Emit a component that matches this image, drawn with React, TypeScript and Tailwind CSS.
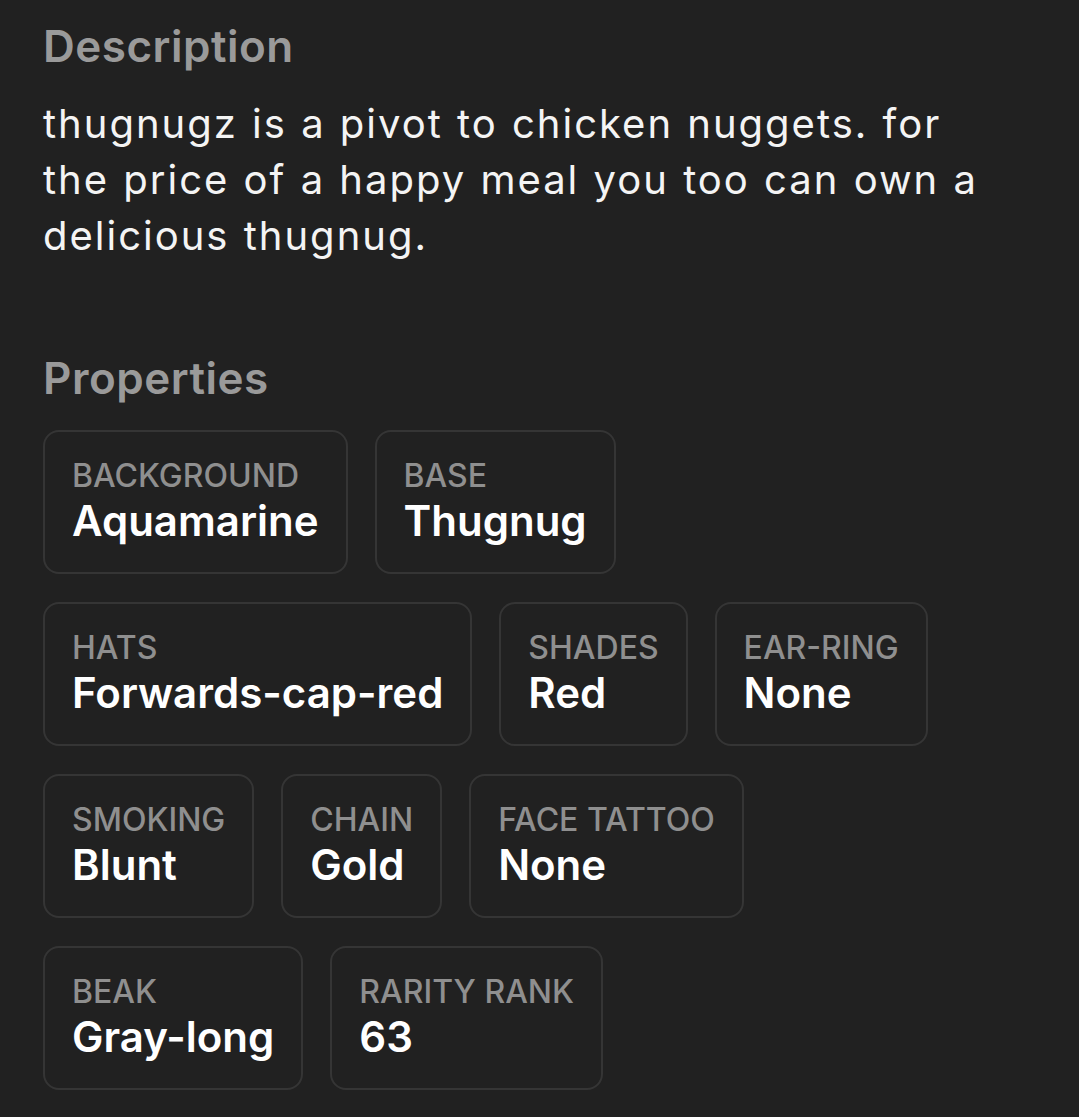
const properties = [
  [
    { label: "Background", value: "Aquamarine" },
    { label: "Base", value: "Thugnug" },
  ],
  [
    { label: "Hats", value: "Forwards-cap-red" },
    { label: "Shades", value: "Red" },
    { label: "Ear-ring", value: "None" },
  ],
  [
    { label: "Smoking", value: "Blunt" },
    { label: "Chain", value: "Gold" },
    { label: "Face Tattoo", value: "None" },
  ],
  [
    { label: "Beak", value: "Gray-long" },
    { label: "Rarity Rank", value: "63" },
  ],
];

function PropertyCard({ label, value }: { label: string; value: string }) {
  return (
    <div className="flex flex-col rounded-[16px] border-2 border-[#353535] px-[27px] py-[25px]">
      <span className="text-[32px] leading-[38px] font-medium uppercase text-[#8f8f8f]">
        {label}
      </span>
      <span className="text-[42px] leading-[52px] font-semibold text-white">{value}</span>
    </div>
  );
}

export default function App() {
  return (
    <div
      className="min-h-[1117px] w-[1079px] bg-[#212121] px-[43px] pt-[16px]"
      style={{ fontFamily: "Inter, 'Noto Sans', sans-serif" }}
    >
      <h2 className="text-[44px] leading-[60px] font-semibold tracking-[0.5px] text-[#9a9a9a]">
        Description
      </h2>
      <p className="mt-[20px] pr-[30px] text-[40px] leading-[56px] tracking-[2px] [word-spacing:1px] text-[#f4f4f4]">
        thugnugz is a pivot to chicken nuggets. for the price of a happy meal you too can own a
        delicious thugnug.
      </p>

      <h2 className="mt-[84px] text-[44px] leading-[60px] font-semibold tracking-[0.5px] text-[#9a9a9a]">
        Properties
      </h2>
      <div className="mt-[22px] flex flex-col gap-[28px]">
        {properties.map((row, i) => (
          <div key={i} className="flex gap-[27px]">
            {row.map(p => (
              <PropertyCard key={p.label} label={p.label} value={p.value} />
            ))}
          </div>
        ))}
      </div>
    </div>
  );
}
